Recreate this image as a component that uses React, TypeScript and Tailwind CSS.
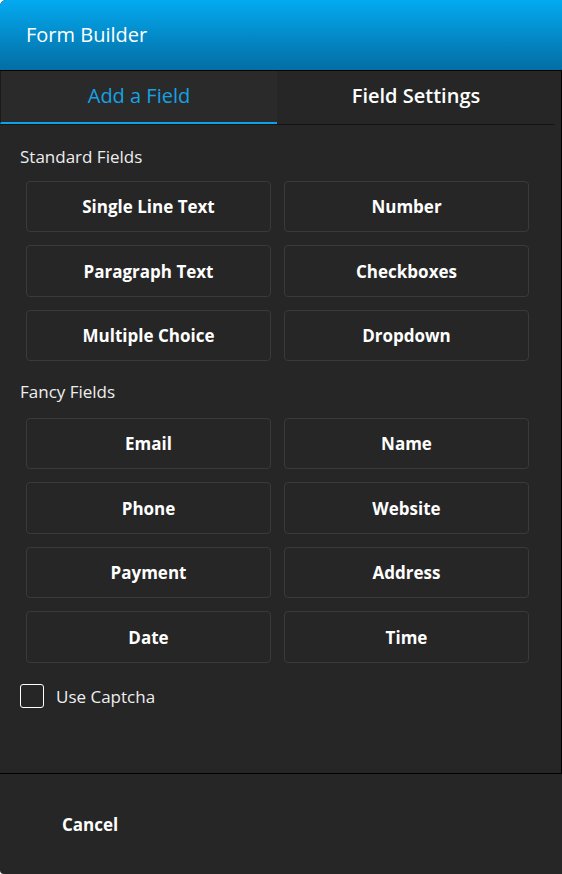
import React, { useState } from 'react';

const standardFields = ['Single Line Text', 'Number', 'Paragraph Text', 'Checkboxes', 'Multiple Choice', 'Dropdown'];
const fancyFields = ['Email', 'Name', 'Phone', 'Website', 'Payment', 'Address', 'Date', 'Time'];

const FieldGrid: React.FC<{ fields: string[] }> = ({ fields }) => (
  <div className="grid grid-cols-2 gap-x-[13px] gap-y-[13px] px-[26px]">
    {fields.map((f) => (
      <button
        key={f}
        className="h-[51.5px] rounded-[4px] border border-[#3a3a3a] pt-px text-[17px] font-bold text-white"
      >
        {f}
      </button>
    ))}
  </div>
);

const App: React.FC = () => {
  const [tab, setTab] = useState<'add' | 'settings'>('add');
  const [captcha, setCaptcha] = useState(false);

  return (
    <div
      className="flex h-[874px] w-[562px] flex-col overflow-hidden rounded-tl-[6px] rounded-bl-[4px] bg-[#262626]"
      style={{ fontFamily: '"Open Sans", "Noto Sans", sans-serif' }}
    >
      {/* Header */}
      <div className="flex h-[71px] shrink-0 items-center border-b border-black bg-gradient-to-b from-[#03aaf1] to-[#036ea4] px-[26px]">
        <span className="text-[20px] text-white">Form Builder</span>
      </div>

      <div className="flex flex-1 flex-col border-r border-black">
        {/* Tabs */}
        <div className="flex w-[555px] border-b border-[#141414]">
          <button
            onClick={() => setTab('add')}
            className={`h-[53px] w-[277px] border-l border-[#1a1a1a] border-b-2 pb-[2px] text-[20px] ${
              tab === 'add' ? 'border-b-[#0ea2e8] bg-[#2a2a2a] text-[#16a1e4]' : 'border-b-transparent text-white'
            }`}
          >
            Add a Field
          </button>
          <button
            onClick={() => setTab('settings')}
            className={`h-[53px] flex-1 border-b-2 pb-[2px] text-[20px] font-semibold ${
              tab === 'settings' ? 'border-b-[#0ea2e8] bg-[#2a2a2a] text-[#16a1e4]' : 'border-b-transparent text-white'
            }`}
          >
            Field Settings
          </button>
        </div>

        {/* Body */}
        <div className="flex w-[555px] flex-1 flex-col">
          <div className="px-5 pt-[19px] pb-[11px] text-[17px] text-[#eeeeee]">Standard Fields</div>
          <FieldGrid fields={standardFields} />
          <div className="px-5 pt-[18px] pb-[13px] text-[17px] text-[#eeeeee]">Fancy Fields</div>
          <FieldGrid fields={fancyFields} />
          <label className="mt-[21px] flex cursor-pointer items-center gap-3 px-5">
            <input
              type="checkbox"
              checked={captcha}
              onChange={() => setCaptcha(!captcha)}
              className="h-[24px] w-[24px] appearance-none rounded-[3px] border border-white bg-transparent"
            />
            <span className="text-[17px] text-[#eeeeee]">Use Captcha</span>
          </label>
        </div>
      </div>

      {/* Footer */}
      <div className="flex h-[101px] shrink-0 items-center border-t border-black px-[62px] pt-[2px]">
        <button className="text-[17px] font-bold text-white">Cancel</button>
      </div>
    </div>
  );
};

export default App;
